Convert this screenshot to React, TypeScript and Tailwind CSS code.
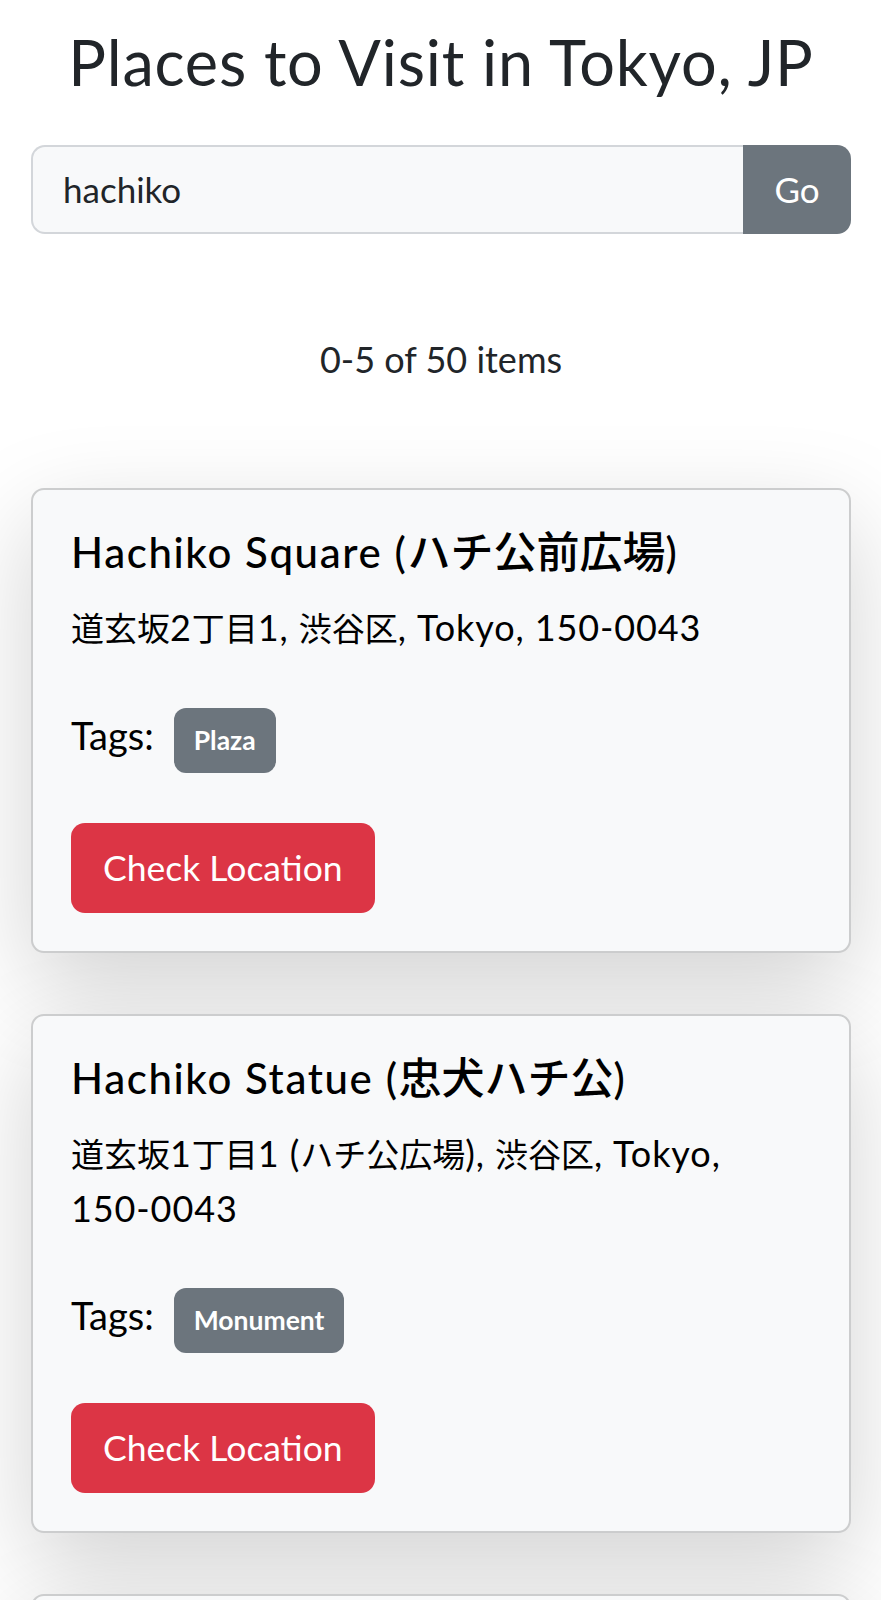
import React from "react";

type Place = {
  name: string;
  jp: string;
  address: string;
  tag: string;
};

const places: Place[] = [
  {
    name: "Hachiko Square",
    jp: "ハチ公前広場",
    address: "道玄坂2丁目1, 渋谷区, Tokyo, 150-0043",
    tag: "Plaza",
  },
  {
    name: "Hachiko Statue",
    jp: "忠犬ハチ公",
    address: "道玄坂1丁目1 (ハチ公広場), 渋谷区, Tokyo, 150-0043",
    tag: "Monument",
  },
  {
    name: "Shibuya Crossing",
    jp: "渋谷スクランブル交差点",
    address: "道玄坂2丁目, 渋谷区, Tokyo, 150-0043",
    tag: "Landmark",
  },
];

const CJK = /([\u3000-\u30ff\u3400-\u9fff\uff00-\uffef]+)/;
const POSTAL = /(\d{3}-\d{4})/;

function Mixed({ text, cjkClass }: { text: string; cjkClass: string }) {
  const parts = text.split(CJK);
  return (
    <>
      {parts.map((s, i) => {
        if (!s) return null;
        if (CJK.test(s)) {
          return (
            <span key={i} className={cjkClass}>
              {s}
            </span>
          );
        }
        return s.split(POSTAL).map((t, j) =>
          POSTAL.test(t) ? (
            <span key={`${i}-${j}`} className="whitespace-nowrap">
              {t}
            </span>
          ) : (
            <React.Fragment key={`${i}-${j}`}>{t}</React.Fragment>
          )
        );
      })}
    </>
  );
}

function Card({ p }: { p: Place }) {
  return (
    <div className="rounded-[13px] border-2 border-[rgba(0,0,0,0.175)] bg-[#f8f9fa] px-[38px] pb-[38px] pt-[38px] text-black shadow-[0_33px_99px_rgba(0,0,0,0.175)]">
      <h5 className="text-[42px] font-medium leading-[48px] tracking-[1.6px]">
        {p.name} (<span className="text-[43px] tracking-normal">{p.jp}</span>)
      </h5>
      <p className="mt-[24px] text-[36px] leading-[54px] tracking-[0.9px]">
        <Mixed text={p.address} cjkClass="text-[33px] tracking-normal" />
      </p>
      <div className="mt-[53px] flex h-[65px] items-center gap-[20px]">
        <span className="mb-[12px] text-[38px] leading-[48px]">Tags:</span>
        <span className="flex h-[65px] items-center rounded-[12px] bg-[#6c757d] px-[20px] text-[26.5px] font-bold text-white">
          {p.tag}
        </span>
      </div>
      <button className="mt-[50px] flex h-[90px] items-center rounded-[14px] bg-[#dc3545] px-[32px] text-[35.5px] text-white">
        Check Location
      </button>
    </div>
  );
}

export default function App() {
  return (
    <div className="min-h-screen bg-white font-['Lato','Noto_Sans_CJK_JP',sans-serif] text-[#212529]">
      <div className="pl-[31px] pr-[30px] pb-[80px]">
        <h1 className="pt-[25px] text-center text-[63px] font-normal leading-[74px] tracking-[0.8px]">
          Places to Visit in Tokyo, JP
        </h1>
        <div className="mt-[46px] flex h-[89px]">
          <input
            readOnly
            value="hachiko"
            className="min-w-0 flex-1 rounded-l-[14px] border-2 border-r-0 border-[#d3d6da] bg-[#f8f9fa] pl-[30px] text-[35px] text-[#212529] outline-none"
          />
          <button className="w-[108px] rounded-r-[14px] bg-[#6c757d] text-[35px] text-white">
            Go
          </button>
        </div>
        <p className="mt-[98px] text-center text-[36px] leading-[54px]">0-5 of 50 items</p>
        <div className="mt-[102px] flex flex-col gap-[61px]">
          {places.map((p) => (
            <Card key={p.name} p={p} />
          ))}
        </div>
      </div>
    </div>
  );
}
